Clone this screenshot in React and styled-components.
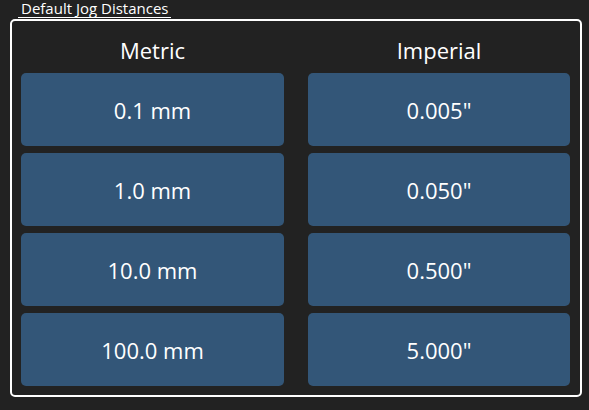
import React from "react";
import styled, { createGlobalStyle } from "styled-components";

const GlobalStyle = createGlobalStyle`
  html, body {
    margin: 0;
    padding: 0;
    background: #222222;
  }
  body {
    font-family: "Open Sans", "Noto Sans", sans-serif;
    color: #ffffff;
  }
`;

const Page = styled.div`
  width: 589px;
  height: 410px;
  box-sizing: border-box;
  padding: 0 7px 0 10px;
  background: #222222;
`;

const Legend = styled.div`
  width: fit-content;
  margin-left: 8px;
  padding: 1px 3px 0;
  height: 16px;
  line-height: 15px;
  font-size: 15px;
  border-bottom: 1px solid #ffffff;
  white-space: nowrap;
`;

const Frame = styled.div`
  margin-top: 1px;
  border: 2px solid #ffffff;
  border-radius: 5px;
  padding: 0 9px 9px;
  display: grid;
  grid-template-columns: 263px 262px;
  column-gap: 24px;
`;

const Column = styled.div`
  display: flex;
  flex-direction: column;
  gap: 7px;
`;

const Heading = styled.div`
  height: 45px;
  padding-top: 12px;
  box-sizing: border-box;
  display: flex;
  align-items: center;
  justify-content: center;
  font-size: 22px;
`;

const JogButton = styled.button`
  height: 73px;
  border: none;
  border-radius: 5px;
  background: #335678;
  color: #ffffff;
  font-family: inherit;
  font-size: 22px;
  cursor: pointer;
  &:hover {
    background: #3d6489;
  }
`;

const columns = [
  { title: "Metric", values: ["0.1 mm", "1.0 mm", "10.0 mm", "100.0 mm"] },
  { title: "Imperial", values: ['0.005"', '0.050"', '0.500"', '5.000"'] }
];

const App = () => {
  return (
    <>
      <GlobalStyle />
      <Page>
        <Legend>Default Jog Distances</Legend>
        <Frame>
          {columns.map(col => (
            <Column key={col.title}>
              <Heading>{col.title}</Heading>
              {col.values.map(v => (
                <JogButton key={v}>{v}</JogButton>
              ))}
            </Column>
          ))}
        </Frame>
      </Page>
    </>
  );
};

export default App;
